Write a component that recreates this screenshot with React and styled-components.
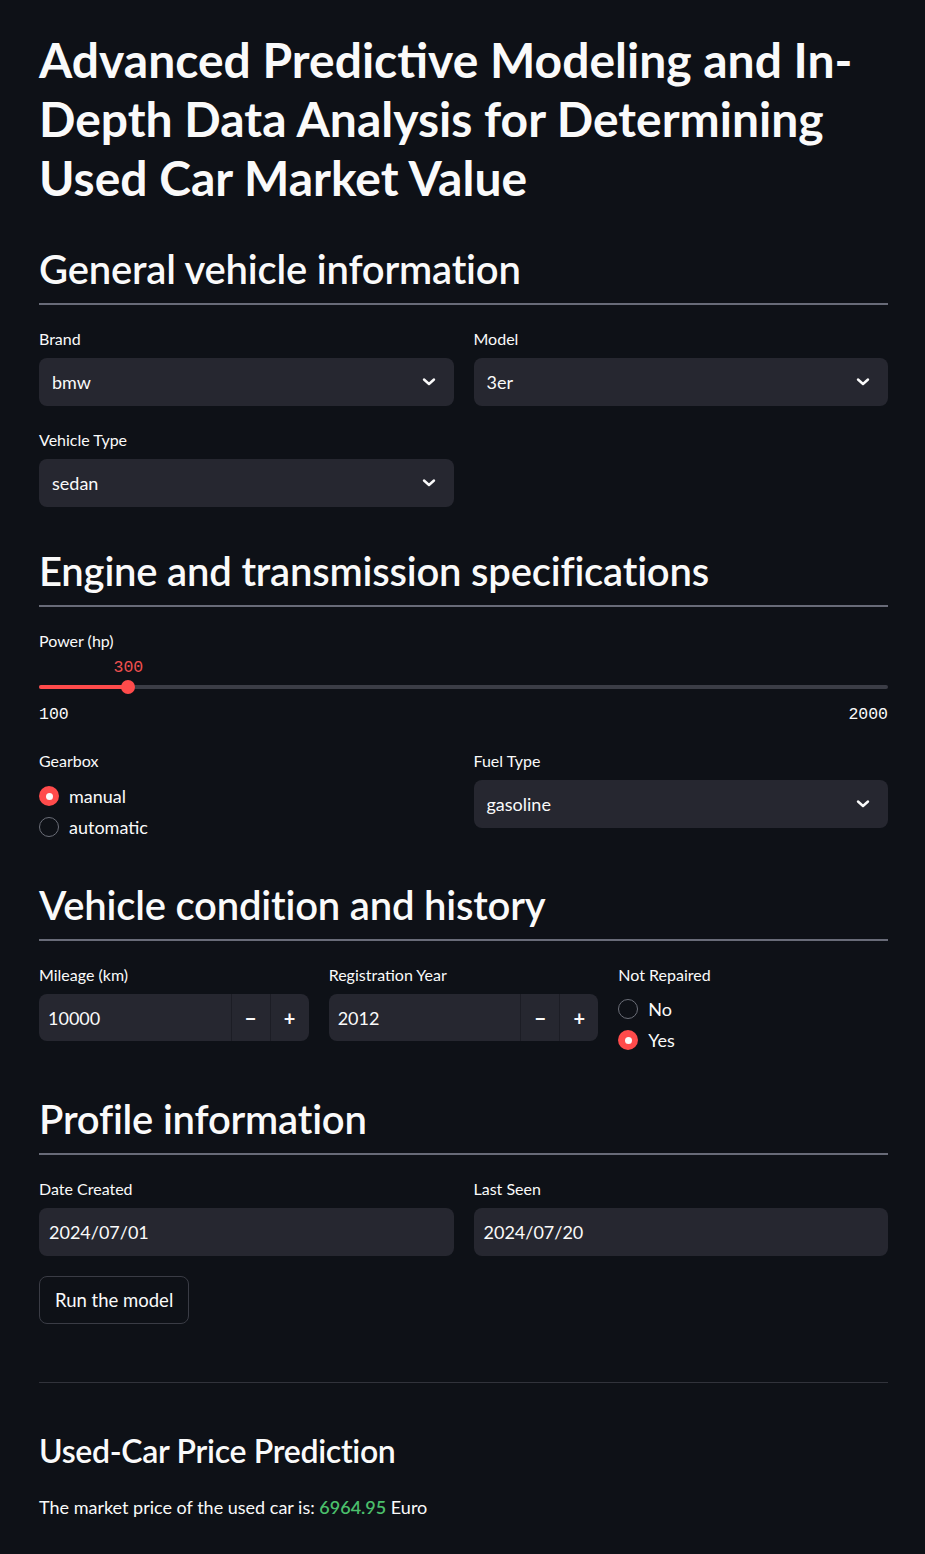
import React from 'react';
import styled, { createGlobalStyle } from 'styled-components';

const Global = createGlobalStyle`
  html, body {
    margin: 0;
    padding: 0;
    background: #0e1117;
  }
  body {
    font-family: "Lato", "Noto Sans", sans-serif;
    color: #fafafa;
  }
`;

const Page = styled.main`
  width: 849px;
  padding: 30px 37px 40px 39px;
  background: #0e1117;
  min-height: 1554px;
  box-sizing: content-box;
`;

const Title = styled.h1`
  margin: 0;
  font-size: 48px;
  line-height: 59px;
  font-weight: 700;
  letter-spacing: 0;
`;

const Section = styled.section`
  margin-top: ${p => p.$top || 32}px;
`;

const SectionTitle = styled.h2`
  margin: 0;
  font-size: 40px;
  line-height: 48px;
  font-weight: 600;
  letter-spacing: -0.2px;
  padding-bottom: 10px;
  border-bottom: 2px solid #686b78;
`;

const Grid = styled.div`
  display: grid;
  grid-template-columns: ${p => p.$cols || '1fr 1fr'};
  column-gap: 20px;
  row-gap: 24px;
  margin-top: ${p => p.$top || 24}px;
`;

const Field = styled.div`
  display: flex;
  flex-direction: column;
`;

const Label = styled.label`
  font-size: 16px;
  line-height: 20px;
  color: #fafafa;
  margin-bottom: 9px;
`;

const Select = styled.div`
  height: 48px;
  background: #262730;
  border-radius: 8px;
  display: flex;
  align-items: center;
  justify-content: space-between;
  padding: 0 18px 0 13px;
  font-size: 18px;
`;

const Chevron = () => (
  <svg width="14" height="10" viewBox="0 0 14 10" fill="none">
    <path d="M2 2.5 L7 7 L12 2.5" stroke="#fafafa" strokeWidth="2.4" strokeLinecap="round" strokeLinejoin="round" />
  </svg>
);

const TextInput = styled.div`
  height: 48px;
  background: #262730;
  border-radius: 8px;
  display: flex;
  align-items: center;
  padding: 0 10px;
  font-size: 18px;
`;

const NumberBox = styled.div`
  height: 47px;
  background: #262730;
  border-radius: 8px;
  display: flex;
  align-items: stretch;
  overflow: hidden;
`;

const NumberValue = styled.div`
  flex: 1;
  display: flex;
  align-items: center;
  padding: 0 9px;
  font-size: 18px;
`;

const Step = styled.div`
  width: 38px;
  display: flex;
  align-items: center;
  justify-content: center;
  font-size: 20px;
  font-weight: 700;
  border-left: 1px solid #1c1d25;
`;

const SliderWrap = styled.div`
  position: relative;
  margin-top: 9px;
  height: 64px;
`;

const SliderValue = styled.div`
  position: absolute;
  top: -2px;
  transform: translateX(-50%);
  font-family: "Liberation Mono", "DejaVu Sans Mono", monospace;
  font-size: 16.5px;
  color: #f0504f;
`;

const Track = styled.div`
  position: absolute;
  top: 25px;
  left: 0;
  right: 0;
  height: 4px;
  border-radius: 2px;
  background: #3b3d46;
`;

const Fill = styled.div`
  height: 100%;
  border-radius: 2px;
  background: #ff4b4b;
`;

const Thumb = styled.div`
  position: absolute;
  top: 20px;
  width: 14px;
  height: 14px;
  border-radius: 50%;
  background: #ff4b4b;
  transform: translateX(-50%);
`;

const Ticks = styled.div`
  position: absolute;
  top: 45px;
  left: 0;
  right: 0;
  display: flex;
  justify-content: space-between;
  font-family: "Liberation Mono", "DejaVu Sans Mono", monospace;
  font-size: 16.5px;
  color: #fafafa;
`;

const RadioList = styled.div`
  display: flex;
  flex-direction: column;
  gap: 7px;
  margin-top: ${p => p.$top || 4}px;
`;

const RadioRow = styled.div`
  display: flex;
  align-items: center;
  gap: 10px;
  font-size: 18px;
  line-height: 24px;
`;

const Dot = styled.span`
  width: 20px;
  height: 20px;
  border-radius: 50%;
  box-sizing: border-box;
  display: flex;
  align-items: center;
  justify-content: center;
  background: ${p => (p.$on ? '#ff4b4b' : '#0e1117')};
  border: ${p => (p.$on ? 'none' : '1px solid #6b6e78')};
  &::after {
    content: '';
    display: ${p => (p.$on ? 'block' : 'none')};
    width: 7px;
    height: 7px;
    border-radius: 50%;
    background: #fafafa;
  }
`;

const Radio = ({ on, children }) => (
  <RadioRow>
    <Dot $on={on} />
    {children}
  </RadioRow>
);

const Button = styled.button`
  margin-top: 20px;
  height: 48px;
  padding: 0 15px;
  background: #0e1117;
  color: #fafafa;
  border: 1px solid #3a3c45;
  border-radius: 8px;
  font-family: inherit;
  font-size: 18.5px;
`;

const Rule = styled.hr`
  margin: 58px 0 0;
  border: none;
  border-top: 1px solid #31333b;
`;

const ResultTitle = styled.h3`
  margin: 48px 0 0;
  font-size: 32px;
  line-height: 40px;
  font-weight: 600;
  letter-spacing: -0.3px;
`;

const ResultText = styled.p`
  margin: 22px 0 0;
  font-size: 18px;
  line-height: 28px;
`;

const Price = styled.span`
  color: #4bbf6b;
  font-weight: 600;
`;

export default function App() {
  const min = 100, max = 2000, val = 300;
  const pct = ((val - min) / (max - min)) * 100;
  return (
    <>
      <Global />
      <Page>
        <Title>Advanced Predictive Modeling and In-Depth Data Analysis for Determining Used Car Market Value</Title>

        <Section $top={38}>
          <SectionTitle>General vehicle information</SectionTitle>
          <Grid>
            <Field>
              <Label>Brand</Label>
              <Select>bmw<Chevron /></Select>
            </Field>
            <Field>
              <Label>Model</Label>
              <Select>3er<Chevron /></Select>
            </Field>
            <Field>
              <Label>Vehicle Type</Label>
              <Select>sedan<Chevron /></Select>
            </Field>
          </Grid>
        </Section>

        <Section $top={40}>
          <SectionTitle>Engine and transmission specifications</SectionTitle>
          <Field style={{ marginTop: 24 }}>
            <Label style={{ marginBottom: 0 }}>Power (hp)</Label>
            <SliderWrap>
              <SliderValue style={{ left: `${pct}%` }}>300</SliderValue>
              <Track><Fill style={{ width: `${pct}%` }} /></Track>
              <Thumb style={{ left: `${pct}%` }} />
              <Ticks><span>100</span><span>2000</span></Ticks>
            </SliderWrap>
          </Field>
          <Grid $top={27}>
            <Field>
              <Label>Gearbox</Label>
              <RadioList>
                <Radio on>manual</Radio>
                <Radio>automatic</Radio>
              </RadioList>
            </Field>
            <Field>
              <Label>Fuel Type</Label>
              <Select>gasoline<Chevron /></Select>
            </Field>
          </Grid>
        </Section>

        <Section $top={42}>
          <SectionTitle>Vehicle condition and history</SectionTitle>
          <Grid $cols="1fr 1fr 1fr">
            <Field>
              <Label>Mileage (km)</Label>
              <NumberBox>
                <NumberValue>10000</NumberValue>
                <Step>−</Step>
                <Step>+</Step>
              </NumberBox>
            </Field>
            <Field>
              <Label>Registration Year</Label>
              <NumberBox>
                <NumberValue>2012</NumberValue>
                <Step>−</Step>
                <Step>+</Step>
              </NumberBox>
            </Field>
            <Field>
              <Label>Not Repaired</Label>
              <RadioList $top={3}>
                <Radio>No</Radio>
                <Radio on>Yes</Radio>
              </RadioList>
            </Field>
          </Grid>
        </Section>

        <Section $top={43}>
          <SectionTitle>Profile information</SectionTitle>
          <Grid>
            <Field>
              <Label>Date Created</Label>
              <TextInput>2024/07/01</TextInput>
            </Field>
            <Field>
              <Label>Last Seen</Label>
              <TextInput>2024/07/20</TextInput>
            </Field>
          </Grid>
          <Button>Run the model</Button>
        </Section>

        <Rule />
        <ResultTitle>Used-Car Price Prediction</ResultTitle>
        <ResultText>
          The market price of the used car is: <Price>6964.95</Price> Euro
        </ResultText>
      </Page>
    </>
  );
}
